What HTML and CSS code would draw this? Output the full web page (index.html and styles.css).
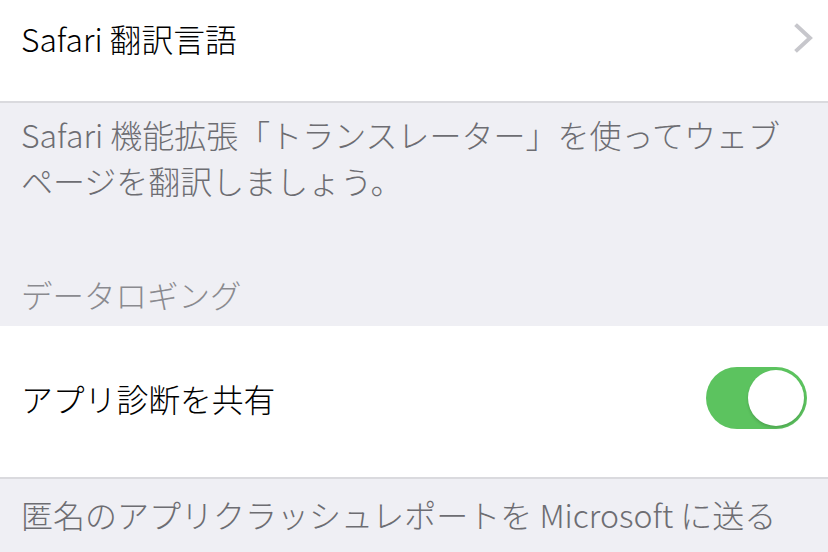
FILE: index.html
```html
<!DOCTYPE html>
<html lang="ja">
<head>
<meta charset="utf-8">
<link rel="stylesheet" href="styles.css">
</head>
<body>
<div class="page">
  <div class="row row-top">
    <span class="label">Safari 翻訳言語</span>
    <svg class="chevron" width="20" height="30" viewBox="0 0 20 30"><path d="M3 3 L16 15 L3 27" fill="none" stroke="#c7c7cc" stroke-width="4" stroke-linecap="square" stroke-linejoin="miter"/></svg>
  </div>
  <div class="footer footer-first">Safari 機能拡張「トランスレーター」を使ってウェブページを翻訳しましょう。</div>
  <div class="header">データロギング</div>
  <div class="row row-toggle">
    <span class="label">アプリ診断を共有</span>
    <div class="switch"><div class="knob"></div></div>
  </div>
  <div class="footer footer-last">匿名のアプリクラッシュレポートを Microsoft に送る</div>
</div>
</body>
</html>
```

FILE: styles.css
```css
html, body {
  margin: 0;
  padding: 0;
  background: #efeff4;
}
.page {
  width: 828px;
  height: 552px;
  overflow: hidden;
  font-family: "Noto Sans CJK JP", "Noto Sans", sans-serif;
  font-weight: 300;
  background: #efeff4;
}
.row {
  display: flex;
  align-items: center;
  justify-content: space-between;
  background: #fff;
  padding: 0 21px;
  box-sizing: border-box;
  border-bottom: 2px solid #dadade;
}
.label {
  font-size: 31.8px;
  color: #000;
  line-height: 46px;
}
.row-top {
  height: 103px;
  padding-bottom: 26px;
  padding-right: 14px;
}
.chevron {
  display: block;
}
.footer {
  font-size: 32px;
  line-height: 46px;
  color: #6d6d72;
  padding: 8px 30px 0 21px;
}
.footer-first {
  height: 168px;
  box-sizing: border-box;
}
.header {
  font-size: 31.5px;
  line-height: 46px;
  color: #8a8a8f;
  padding: 0 21px 9px;
}
.row-toggle {
  height: 153px;
  padding-bottom: 8px;
}
.switch {
  width: 101px;
  height: 62px;
  border-radius: 31px;
  background: #5cc35f;
  display: flex;
  justify-content: flex-end;
  align-items: center;
  padding: 0 3px;
  box-sizing: border-box;
}
.knob {
  width: 56px;
  height: 56px;
  border-radius: 50%;
  background: #fff;
  box-shadow: 0 2px 3px rgba(0,0,0,0.15);
}
.footer-last {
  padding-top: 12px;
}
```
